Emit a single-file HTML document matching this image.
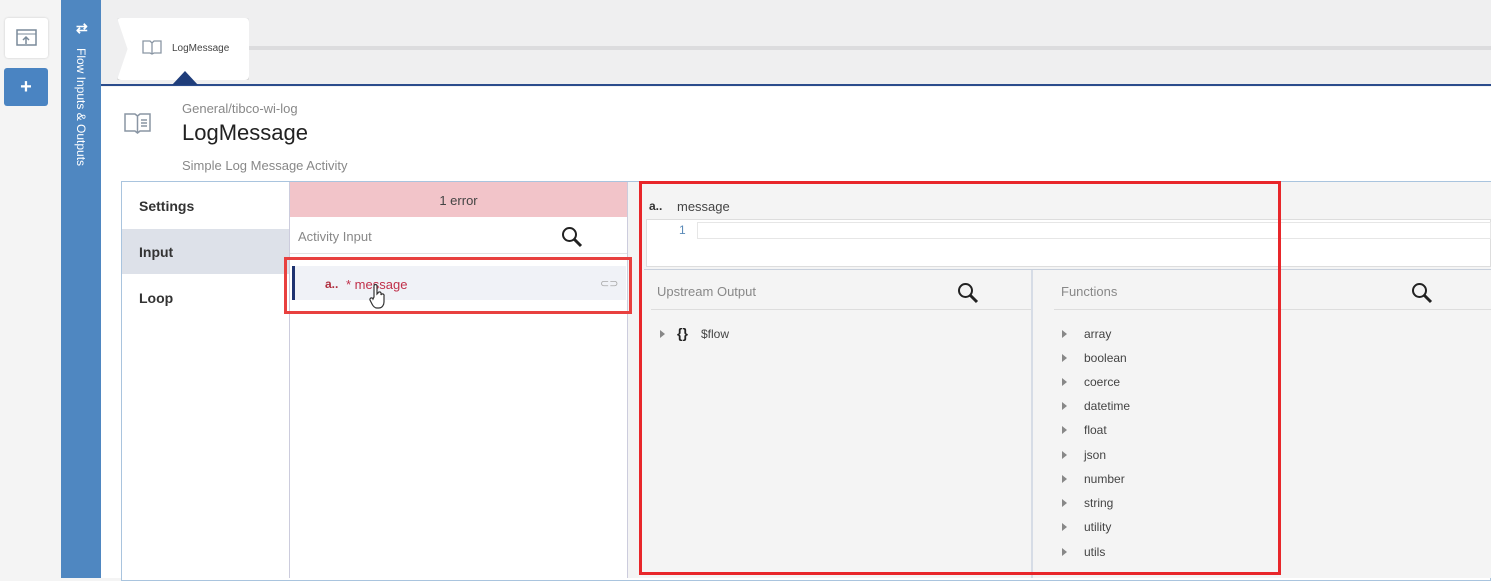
<!DOCTYPE html><html><head><style>
*{box-sizing:border-box;margin:0;padding:0}
body{width:1491px;height:578px;overflow:hidden;background:#f4f4f4;font-family:"Liberation Sans",sans-serif;position:relative}
.a{position:absolute}
.t{font-size:13px;color:#555}
.fn{position:absolute;left:1064px;font-size:12px;color:#444}
.fn:before{content:"";position:absolute;left:-2px;top:3px;border-left:5px solid #888;border-top:4px solid transparent;border-bottom:4px solid transparent}
.fn span{margin-left:20px}
</style></head><body>
<div class="a" style="left:5px;top:18px;width:43px;height:40px;background:#fff;border-radius:3px;box-shadow:0 0 2px #ccc"></div>
<svg class="a" style="left:16px;top:29px" width="21" height="18"><rect x="1" y="1" width="19" height="15" fill="none" stroke="#7a8a9a" stroke-width="1.5"/><line x1="1" y1="5" x2="20" y2="5" stroke="#7a8a9a"/><path d="M10 15V8M7 11l3-3 3 3" stroke="#7a8a9a" fill="none" stroke-width="1.5"/></svg>
<div class="a" style="left:4px;top:68px;width:44px;height:38px;background:#4a84c2;border-radius:3px;color:#fff;font-size:20px;font-weight:bold;text-align:center;line-height:38px">+</div>
<div class="a" style="left:61px;top:0;width:40px;height:578px;background:#4f87c1"></div>
<div class="a" style="left:76px;top:20px;color:#fff;font-size:14px;font-weight:bold">⇄</div>
<div class="a" style="left:74px;top:48px;color:#fff;font-size:12px;writing-mode:vertical-rl;white-space:nowrap">Flow Inputs &amp; Outputs</div>
<div class="a" style="left:101px;top:0;width:1390px;height:86px;background:#efeff0;border-bottom:2px solid #2b4c8c"></div>
<div class="a" style="left:249px;top:46px;width:1242px;height:4px;background:#dcdcde"></div>
<div class="a" style="left:117px;top:18px;width:132px;height:62px;background:#fff;border-radius:4px;box-shadow:0 1px 3px #bbb;clip-path:polygon(0 0,100% 0,100% 100%,0 100%,8% 50%)"></div>
<svg class="a" style="left:142px;top:40px" width="20" height="15"><path d="M1 1h7l2 2 2-2h7v12h-7l-2 1-2-1H1z M10 3v11" fill="none" stroke="#8a96a4" stroke-width="1.3"/></svg>
<div class="a" style="left:172px;top:43px;font-size:10px;color:#444">LogMessage</div>
<div class="a" style="left:172px;top:71px;border-left:13px solid transparent;border-right:13px solid transparent;border-bottom:14px solid #1f3d7a"></div>
<div class="a" style="left:101px;top:87px;width:1390px;height:491px;background:#fff"></div>
<svg class="a" style="left:124px;top:112px" width="27" height="22"><path d="M1 2h10l2.5 2 2.5-2h10v17h-10l-2.5 2-2.5-2H1z M13.5 4v17M17 8h6M17 11h6M17 14h6" fill="none" stroke="#8a96a4" stroke-width="1.5"/></svg>
<div class="a" style="left:182px;top:101px;font-size:13px;color:#888">General/tibco-wi-log</div>
<div class="a" style="left:182px;top:120px;font-size:22px;color:#222">LogMessage</div>
<div class="a" style="left:182px;top:158px;font-size:13px;color:#888">Simple Log Message Activity</div>
<div class="a" style="left:121px;top:181px;width:1370px;height:400px;border:1px solid #a9c4de;background:#fff"></div>
<div class="a" style="left:139px;top:198px;font-size:14px;font-weight:bold;color:#333">Settings</div>
<div class="a" style="left:122px;top:229px;width:167px;height:45px;background:#dde1e9"></div>
<div class="a" style="left:139px;top:244px;font-size:14px;font-weight:bold;color:#333">Input</div>
<div class="a" style="left:139px;top:290px;font-size:14px;font-weight:bold;color:#333">Loop</div>
<div class="a" style="left:289px;top:182px;width:1px;height:396px;background:#ccd"></div>
<div class="a" style="left:290px;top:182px;width:337px;height:35px;background:#f2c4c9;text-align:center;line-height:38px;font-size:13px;color:#444">1 error</div>
<div class="a t" style="left:298px;top:229px;color:#888">Activity Input</div>
<svg class="a" style="left:561px;top:226px" width="22" height="22"><circle cx="8.5" cy="8.5" r="6.5" fill="none" stroke="#222" stroke-width="2"/><path d="M13 13l7 7" stroke="#222" stroke-width="3"/></svg>
<div class="a" style="left:290px;top:253px;width:337px;height:1px;background:#e3e3e3"></div>
<div class="a" style="left:292px;top:266px;width:334px;height:34px;background:#f0f2f7;border-left:3px solid #1f3370"></div>
<div class="a" style="left:325px;top:277px;font-size:12px;color:#b03040;font-weight:bold">a..</div>
<div class="a" style="left:346px;top:277px;font-size:13px;color:#c0304a">* message</div>
<div class="a" style="left:600px;top:277px;font-size:11px;color:#aaa">⊂⊃</div>
<div class="a" style="left:627px;top:182px;width:1px;height:396px;background:#ccd"></div>
<div class="a" style="left:628px;top:182px;width:863px;height:396px;background:#f4f4f4"></div>
<div class="a" style="left:649px;top:199px;font-size:12px;font-weight:bold;color:#333">a..</div>
<div class="a t" style="left:677px;top:199px;color:#444">message</div>
<div class="a" style="left:646px;top:219px;width:845px;height:48px;background:#fff;border:1px solid #ddd"></div>
<div class="a" style="left:697px;top:222px;width:794px;height:17px;border:1px solid #e6e6e6"></div>
<div class="a" style="left:679px;top:223px;font-size:12px;color:#5a8ab8">1</div>
<div class="a" style="left:644px;top:269px;width:847px;height:1px;background:#c8d0dc"></div>
<div class="a" style="left:1031px;top:270px;width:2px;height:308px;background:#d6dce6"></div>
<div class="a t" style="left:657px;top:284px;color:#888">Upstream Output</div>
<svg class="a" style="left:957px;top:282px" width="22" height="22"><circle cx="8.5" cy="8.5" r="6.5" fill="none" stroke="#222" stroke-width="2"/><path d="M13 13l7 7" stroke="#222" stroke-width="3"/></svg>
<div class="a" style="left:651px;top:309px;width:380px;height:1px;background:#ddd"></div>
<div class="a" style="left:660px;top:330px;border-left:5px solid #888;border-top:4px solid transparent;border-bottom:4px solid transparent"></div>
<div class="a" style="left:677px;top:325px;font-size:14px;font-weight:bold;color:#222">{}</div>
<div class="a" style="left:701px;top:327px;font-size:12px;color:#444">$flow</div>
<div class="a t" style="left:1061px;top:284px;color:#888">Functions</div>
<svg class="a" style="left:1411px;top:282px" width="22" height="22"><circle cx="8.5" cy="8.5" r="6.5" fill="none" stroke="#222" stroke-width="2"/><path d="M13 13l7 7" stroke="#222" stroke-width="3"/></svg>
<div class="a" style="left:1054px;top:309px;width:437px;height:1px;background:#ddd"></div>
<div class="fn" style="top:327px"><span>array</span></div>
<div class="fn" style="top:351px"><span>boolean</span></div>
<div class="fn" style="top:375px"><span>coerce</span></div>
<div class="fn" style="top:399px"><span>datetime</span></div>
<div class="fn" style="top:423px"><span>float</span></div>
<div class="fn" style="top:448px"><span>json</span></div>
<div class="fn" style="top:472px"><span>number</span></div>
<div class="fn" style="top:496px"><span>string</span></div>
<div class="fn" style="top:520px"><span>utility</span></div>
<div class="fn" style="top:545px"><span>utils</span></div>
<div class="a" style="left:284px;top:257px;width:348px;height:57px;border:3px solid #e8403f"></div>
<div class="a" style="left:639px;top:181px;width:642px;height:394px;border:3px solid #e8262a"></div>
<svg class="a" style="left:369px;top:283px" width="16" height="26"><path d="M5 14V3a1.5 1.5 0 0 1 3 0v8l1-1a1.5 1.5 0 0 1 3 1v1a1.5 1.5 0 0 1 3 1v6c0 3-2 6-5 6H8c-2 0-4-2-5-4l-2-4a1.5 1.5 0 0 1 3-1z" fill="#fff" stroke="#333" stroke-width="1.2"/></svg>
</body></html>
